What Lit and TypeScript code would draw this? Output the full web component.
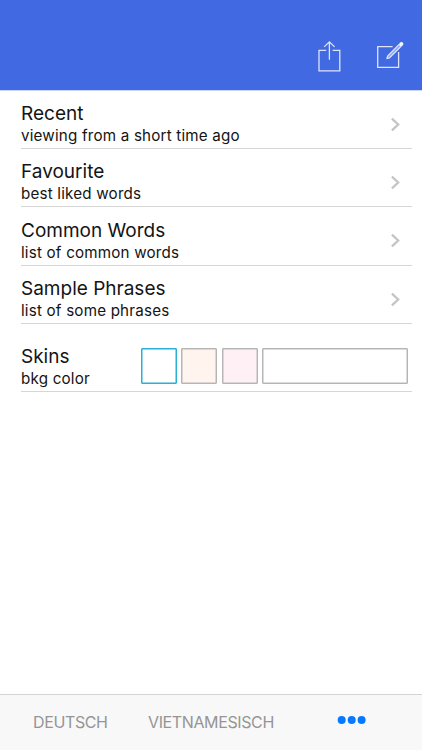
import { LitElement, html, css, svg } from "lit";
import { customElement } from "lit/decorators.js";

interface MenuItem {
  title: string;
  detail: string;
}

const ITEMS: MenuItem[] = [
  { title: "Recent", detail: "viewing from a short time ago" },
  { title: "Favourite", detail: "best liked words" },
  { title: "Common Words", detail: "list of common words" },
  { title: "Sample Phrases", detail: "list of some phrases" },
];

const chevron = svg`<path d="M1.9 1.6 L8.2 7.5 L1.9 13.4" />`;

@customElement("app-root")
export class AppRoot extends LitElement {
  static styles = css`
    :host {
      display: flex;
      flex-direction: column;
      height: 750px;
      box-sizing: border-box;
      background: #fff;
      color: #141414;
      font-family: Inter, "Liberation Sans", sans-serif;
      overflow: hidden;
    }
    header {
      flex: none;
      box-sizing: border-box;
      height: 91px;
      background: #4169e1;
      border-bottom: 1px solid #ccd6fa;
      background-clip: padding-box;
      display: flex;
      justify-content: flex-end;
      align-items: flex-start;
      gap: 34px;
      padding: 39px 17px 0 0;
    }
    header svg {
      display: block;
      fill: none;
      stroke: #dde4fb;
      stroke-width: 1.3;
    }
    header .body {
      stroke-width: 1.2;
      fill: #8ea6ee;
    }
    header .knob {
      fill: #f4f6fe;
      stroke: none;
    }
    main {
      flex: 1;
      margin-top: -0.5px;
      padding: 0 10px 0 21px;
    }
    .row {
      box-sizing: border-box;
      height: 58.4px;
      display: flex;
      justify-content: space-between;
      border-bottom: 1px solid #d6d6d6;
      padding-top: 11.5px;
    }
    .skins {
      height: 67.9px;
      padding-top: 20.5px;
    }
    .title {
      font-size: 19px;
      line-height: 23px;
      letter-spacing: 0;
    }
    .detail {
      font-size: 15.2px;
      line-height: 21.4px;
      letter-spacing: 0.19px;
    }
    .chevron {
      display: block;
      margin: 14.5px 11px 0 0;
      fill: none;
      stroke: #c5c5c9;
      stroke-width: 2.3;
    }
    .swatches {
      display: flex;
      gap: 4.4px;
      margin: 3.8px 4px 0 0;
    }
    .swatch {
      box-sizing: border-box;
      width: 36px;
      height: 36px;
      border: 1px solid #b5b5b5;
      border-radius: 1px;
      box-shadow: inset 0 0 0 0.5px #b9b9b9;
    }
    .selected {
      border-color: #27b0d8;
      box-shadow: inset 0 0 0 0.5px #27b0d8;
    }
    .seashell {
      background: #fff5ee;
    }
    .lavender {
      background: #fff0f5;
    }
    .wide {
      width: 146px;
    }
    footer {
      flex: none;
      box-sizing: border-box;
      height: 56px;
      background: #f8f8f8;
      border-top: 1px solid #d4d4d4;
      display: flex;
      align-items: flex-start;
      color: #959595;
      font-size: 16px;
      line-height: 20px;
      letter-spacing: -0.38px;
      padding: 17px 0 0 33px;
    }
    .german {
      width: 115px;
    }
    .vietnamese {
      width: 189px;
    }
    .more {
      display: block;
      margin-top: 3px;
      fill: #067aff;
    }
  `;

  render() {
    return html`
      <header>
        <svg width="24" height="34" viewBox="0 0 24 34">
          <path d="M9.2 11.4 H2 V31.8 H22.8 V11.4 H15.6" />
          <path d="M12.4 20.8 V3 M7.2 7.9 L12.4 2.9 L17.6 7.9" />
        </svg>
        <svg width="30" height="34" viewBox="0 0 30 34">
          <path d="M17.6 7.7 H2.7 V28.4 H23.6 V13" />
          <path class="body" d="M12 19.4 L12.6 17 L24.2 5.3 L26.1 7.2 L14.4 18.9 Z" />
          <circle class="knob" cx="26.4" cy="4.9" r="2" />
        </svg>
      </header>
      <main>
        ${ITEMS.map(
          (item) => html`<div class="row">
            <div>
              <div class="title">${item.title}</div>
              <div class="detail">${item.detail}</div>
            </div>
            <svg class="chevron" width="11" height="15" viewBox="0 0 11 15">${chevron}</svg>
          </div>`
        )}
        <div class="row skins">
          <div>
            <div class="title">Skins</div>
            <div class="detail">bkg color</div>
          </div>
          <div class="swatches">
            <div class="swatch selected"></div>
            <div class="swatch seashell"></div>
            <div class="swatch lavender"></div>
            <div class="swatch wide"></div>
          </div>
        </div>
      </main>
      <footer>
        <span class="german">DEUTSCH</span>
        <span class="vietnamese">VIETNAMESISCH</span>
        <svg class="more" width="30" height="10" viewBox="0 0 30 10">
          <circle cx="4.7" cy="5" r="4" />
          <circle cx="14.7" cy="5" r="4" />
          <circle cx="24.6" cy="5" r="4" />
        </svg>
      </footer>
    `;
  }
}
